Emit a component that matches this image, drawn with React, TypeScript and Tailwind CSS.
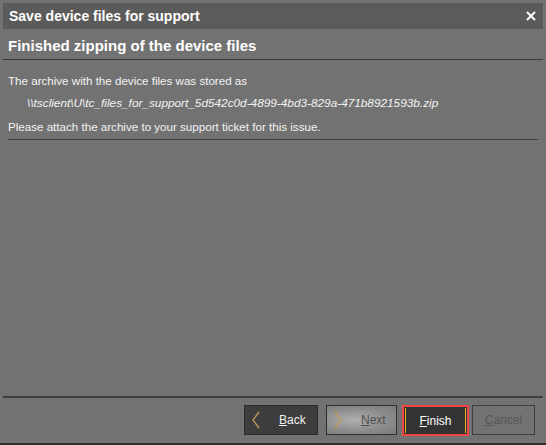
import React from "react";

const Chevron = ({ dir }: { dir: "left" | "right" }) => (
  <svg width="10" height="18" viewBox="0 0 10 18" className="shrink-0">
    {dir === "left" ? (
      <polyline points="8,1 2,9 8,17" fill="none" stroke="#c29a55" strokeWidth="1.3" />
    ) : (
      <polyline points="2,1 8,9 2,17" fill="none" stroke="#c29a55" strokeWidth="1.3" />
    )}
  </svg>
);

export default function App() {
  return (
    <div
      className="w-[546px] h-[445px] bg-[#727272] flex flex-col overflow-hidden border-b-2 border-[#2e2e2e]"
      style={{ fontFamily: "'Liberation Sans', Arial, sans-serif" }}
    >
      {/* Title bar */}
      <div className="mx-[3px] mt-[3px] h-[26px] bg-[#5b5b5b] flex items-center justify-between pl-[6px] pr-[7px]">
        <span className="text-white font-bold text-[14px] leading-none">Save device files for support</span>
        <svg width="10" height="10" viewBox="0 0 10 10">
          <path d="M1 1 L9 9 M9 1 L1 9" stroke="#ffffff" strokeWidth="2" />
        </svg>
      </div>

      {/* Heading */}
      <div className="mx-[3px] h-[31px] border-b border-[#3a3a3a] flex items-center pl-[5px] pt-[3px]">
        <span className="text-white font-bold text-[15px] leading-none">Finished zipping of the device files</span>
      </div>

      {/* Content */}
      <div className="mx-[8px] pt-[12px] border-b border-[#3f3f3f] pb-[1px] text-[11.6px] text-[#f2f2f2] leading-none">
        <div className="h-[18px] flex items-center">The archive with the device files was stored as</div>
        <div className="h-[26px] flex items-center pl-[19px] pt-[2px] italic text-[11.8px]">
          \\tsclient\U\tc_files_for_support_5d542c0d-4899-4bd3-829a-471b8921593b.zip
        </div>
        <div className="h-[22px] flex items-center">Please attach the archive to your support ticket for this issue.</div>
      </div>

      <div className="flex-1" />

      {/* Footer */}
      <div className="mx-[3px] border-t-2 border-[#3e3e3e] h-[47px] flex items-start pt-[7px] justify-end pr-[8px] text-[12px]">
        <button className="w-[74px] h-[30px] mr-[8px] bg-[#3d3d3d] border border-[#2a2a2a] flex items-center pl-[6px] text-[#f0f0f0]">
          <Chevron dir="left" />
          <span className="ml-[18px]"><span className="underline">B</span>ack</span>
        </button>
        <button
          className="w-[71px] h-[30px] mr-[5px] border border-[#2f2f2f] flex items-center pl-[6px] text-[#4e4e4e]"
          style={{ background: "radial-gradient(ellipse at 40% 50%, #b0b0b0 0%, #8a8a8a 60%, #7a7a7a 100%)" }}
        >
          <Chevron dir="right" />
          <span className="ml-[18px]"><span className="underline">N</span>ext</span>
        </button>
        <button className="w-[67px] h-[31px] mr-[3px] bg-[#333333] border-2 border-[#f04545] flex items-center justify-center text-white relative">
          <span className="absolute left-[1px] top-[1px] bottom-[1px] w-[1px] bg-[#e8b020]" />
          <span className="absolute right-[1px] top-[1px] bottom-[1px] w-[1px] bg-[#e8b020]" />
          <span><span className="underline">F</span>inish</span>
        </button>
        <button className="w-[63px] h-[30px] bg-[#727272] border border-[#3f3f3f] flex items-center justify-center text-[#575757]">
          <span><span className="underline">C</span>ancel</span>
        </button>
      </div>
    </div>
  );
}
